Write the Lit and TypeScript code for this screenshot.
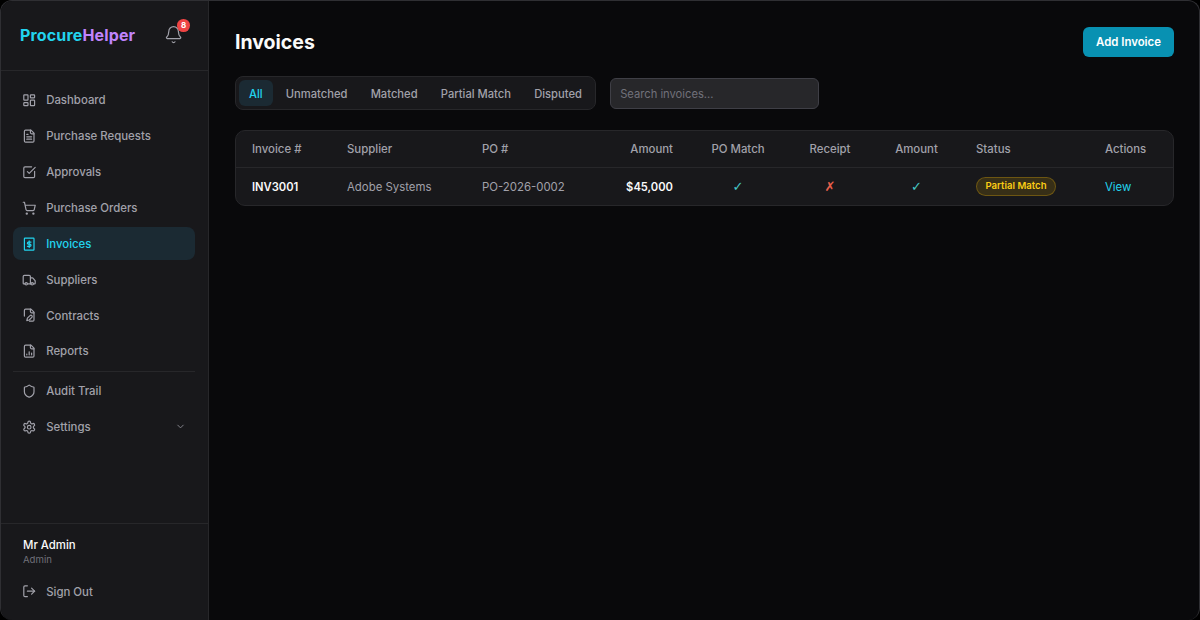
import { LitElement, html, css, svg } from "lit";
import { customElement } from "lit/decorators.js";

const icons: Record<string, any> = {
  dashboard: svg`<rect x="3" y="3" width="7" height="9" rx="1"/><rect x="14" y="3" width="7" height="5" rx="1"/><rect x="14" y="12" width="7" height="9" rx="1"/><rect x="3" y="16" width="7" height="5" rx="1"/>`,
  file: svg`<path d="M15 2H6a2 2 0 0 0-2 2v16a2 2 0 0 0 2 2h12a2 2 0 0 0 2-2V7Z"/><path d="M14 2v4a2 2 0 0 0 2 2h4"/><path d="M16 13H8"/><path d="M16 17H8"/><path d="M10 9H8"/>`,
  check: svg`<path d="M21 10.5V19a2 2 0 0 1-2 2H5a2 2 0 0 1-2-2V5a2 2 0 0 1 2-2h11"/><path d="m9 11 3 3L22 4"/>`,
  cart: svg`<circle cx="8" cy="21" r="1"/><circle cx="19" cy="21" r="1"/><path d="M2.05 2.05h2l2.66 12.42a2 2 0 0 0 2 1.58h9.78a2 2 0 0 0 1.95-1.57l1.65-7.43H5.12"/>`,
  invoice: svg`<rect x="4" y="2" width="16" height="20" rx="1"/><path d="M15 8.5h-4.2a1.75 1.75 0 0 0 0 3.5h2.4a1.75 1.75 0 0 1 0 3.5H9"/><path d="M12 6.5v11"/>`,
  truck: svg`<path d="M14 18V6a2 2 0 0 0-2-2H4a2 2 0 0 0-2 2v11a1 1 0 0 0 1 1h2"/><path d="M15 18H9"/><path d="M19 18h2a1 1 0 0 0 1-1v-3.65a1 1 0 0 0-.22-.62l-3.48-4.35A1 1 0 0 0 17.52 8H14"/><circle cx="17" cy="18" r="2"/><circle cx="7" cy="18" r="2"/>`,
  contract: svg`<path d="M12.5 22H18a2 2 0 0 0 2-2V7l-5-5H6a2 2 0 0 0-2 2v9.5"/><path d="M14 2v4a2 2 0 0 0 2 2h4"/><path d="M13.4 12.6a2 2 0 0 1 3 3L12 20l-4 1 1-4Z"/>`,
  reports: svg`<path d="M15 2H6a2 2 0 0 0-2 2v16a2 2 0 0 0 2 2h12a2 2 0 0 0 2-2V7Z"/><path d="M14 2v4a2 2 0 0 0 2 2h4"/><path d="M8 18v-1"/><path d="M12 18v-5"/><path d="M16 18v-3"/>`,
  shield: svg`<path d="M20 13c0 5-3.5 7.5-7.66 8.95a1 1 0 0 1-.67-.01C7.5 20.5 4 18 4 13V6a1 1 0 0 1 1-1c2 0 4.5-1.2 6.24-2.72a1.17 1.17 0 0 1 1.52 0C14.51 3.81 17 5 19 5a1 1 0 0 1 1 1z"/>`,
  gear: svg`<path d="M12.22 2h-.44a2 2 0 0 0-2 2v.18a2 2 0 0 1-1 1.73l-.43.25a2 2 0 0 1-2 0l-.15-.08a2 2 0 0 0-2.73.73l-.22.38a2 2 0 0 0 .73 2.73l.15.1a2 2 0 0 1 1 1.72v.51a2 2 0 0 1-1 1.74l-.15.09a2 2 0 0 0-.73 2.73l.22.38a2 2 0 0 0 2.73.73l.15-.08a2 2 0 0 1 2 0l.43.25a2 2 0 0 1 1 1.73V20a2 2 0 0 0 2 2h.44a2 2 0 0 0 2-2v-.18a2 2 0 0 1 1-1.73l.43-.25a2 2 0 0 1 2 0l.15.08a2 2 0 0 0 2.73-.73l.22-.39a2 2 0 0 0-.73-2.73l-.15-.08a2 2 0 0 1-1-1.74v-.5a2 2 0 0 1 1-1.74l.15-.09a2 2 0 0 0 .73-2.73l-.22-.38a2 2 0 0 0-2.73-.73l-.15.08a2 2 0 0 1-2 0l-.43-.25a2 2 0 0 1-1-1.73V4a2 2 0 0 0-2-2z"/><circle cx="12" cy="12" r="3"/>`,
  logout: svg`<path d="M9 21H5a2 2 0 0 1-2-2V5a2 2 0 0 1 2-2h4"/><path d="m16 17 5-5-5-5"/><path d="M21 12H9"/>`,
  bell: svg`<path d="M10.27 21a2 2 0 0 0 3.46 0"/><path d="M3.26 15.33A1 1 0 0 0 4 17h16a1 1 0 0 0 .74-1.67C19.41 13.96 18 12.5 18 8A6 6 0 0 0 6 8c0 4.5-1.41 5.96-2.74 7.33"/>`,
  chevron: svg`<path d="m6 9 6 6 6-6"/>`,
};

const icon = (n: string, cls = "ico") =>
  html`<svg class=${cls} viewBox="0 0 24 24" fill="none" stroke="currentColor" stroke-width="2" stroke-linecap="round" stroke-linejoin="round">${icons[n]}</svg>`;

@customElement("app-root")
export class AppRoot extends LitElement {
  static styles = css`
    :host {
      display: block;
      width: 1200px;
      height: 620px;
      background: #000;
      font-family: Inter, "Liberation Sans", sans-serif;
      overflow: hidden;
    }
    * { box-sizing: border-box; }
    .window {
      display: flex;
      height: 620px;
      background: #09090b;
      border: 1px solid #2f2f33;
      border-bottom: 0;
      border-radius: 12px;
      overflow: hidden;
    }
    .side {
      width: 208px;
      flex: none;
      display: flex;
      flex-direction: column;
      background: #18181b;
      border-right: 1px solid #27272a;
    }
    .brand {
      height: 70px;
      flex: none;
      display: flex;
      align-items: center;
      justify-content: space-between;
      padding: 0 24.5px 1px 19px;
      border-bottom: 1px solid #27272a;
    }
    .logo {
      font-size: 16px;
      font-weight: 700;
      letter-spacing: 0.15px;
    }
    .logo .a { color: #22d3ee; }
    .logo .b { color: #c084fc; }
    .bell { position: relative; display: flex; color: #a1a1aa; }
    .bell-ico { width: 19.2px; height: 19.2px; stroke-width: 1.5; }
    .badge {
      position: absolute;
      top: -6.4px;
      right: -6.4px;
      width: 12.8px;
      height: 12.8px;
      border-radius: 50%;
      background: #ef4444;
      color: #fff;
      font-size: 8px;
      font-weight: 700;
      display: flex;
      align-items: center;
      justify-content: center;
    }
    nav {
      flex: 1;
      padding: 12.6px 13px 0 12px;
      display: flex;
      flex-direction: column;
      gap: 2.6px;
    }
    .item {
      height: 33.3px;
      flex: none;
      display: flex;
      align-items: center;
      gap: 9.6px;
      padding: 0 9.2px;
      border-radius: 8px;
      color: #a1a1aa;
      font-size: 11.4px;
      font-weight: 500;
    }
    .item.on {
      background: #1b2a33;
      color: #22d3ee;
    }
    .ico { width: 14.4px; height: 14.4px; flex: none; stroke-width: 2; }
    .chev { width: 11px; height: 11px; margin-left: auto; stroke-width: 2; color: #8a8a92; }
    .sep { height: 1px; flex: none; background: #27272a; }
    .foot {
      height: 97px;
      flex: none;
      border-top: 1px solid #27272a;
      padding: 14px 12px 0;
    }
    .who { padding: 0 10px; }
    .name { color: #fafafa; font-size: 11.4px; font-weight: 500; line-height: 15px; }
    .role { color: #71717a; font-size: 9.6px; line-height: 14px; }
    .foot .item { margin-top: 8px; }
    main {
      flex: 1;
      min-width: 0;
      padding: 26px 25px 0 26px;
    }
    .head {
      display: flex;
      justify-content: space-between;
      align-items: center;
      height: 29.6px;
    }
    h1 {
      margin: 0;
      color: #fafafa;
      font-size: 19.5px;
      font-weight: 700;
    }
    .add {
      width: 91px;
      height: 29.6px;
      border: 0;
      border-radius: 6px;
      background: #0891b2;
      color: #fff;
      font: 600 11.4px Inter, sans-serif;
      padding: 0;
    }
    .bar {
      display: flex;
      align-items: center;
      gap: 13.6px;
      margin-top: 19.8px;
    }
    .tabs {
      display: flex;
      gap: 3.2px;
      height: 34px;
      padding: 3px;
      background: #18181b;
      border: 1px solid #27272a;
      border-radius: 8px;
    }
    .tab {
      display: flex;
      align-items: center;
      padding: 1px 10px 0;
      border-radius: 6px;
      font-size: 11.2px;
      font-weight: 500;
      color: #a1a1aa;
    }
    .tab.on { background: #1b2a33; color: #22d3ee; }
    .search {
      width: 209px;
      height: 31px;
      padding: 1px 9.6px 0;
      background: #27272a;
      border: 1px solid #3f3f46;
      border-radius: 6px;
      color: #fafafa;
      font: 11.2px Inter, sans-serif;
      outline: none;
    }
    .search::placeholder { color: #71717a; opacity: 1; }
    .card {
      margin-top: 19.6px;
      background: #18181b;
      border: 1px solid #27272a;
      border-radius: 10px;
      overflow: hidden;
    }
    table { width: 100%; border-collapse: collapse; table-layout: fixed; font-size: 11.4px; }
    th {
      height: 36.5px;
      padding: 0 16px;
      text-align: left;
      font-weight: 500;
      color: #a1a1aa;
      border-bottom: 1px solid #27272a;
    }
    td { height: 38px; padding: 0 16px; color: #a1a1aa; }
    .r { text-align: right; }
    .c { text-align: center; }
    .strong { color: #fafafa; font-weight: 600; font-size: 11.2px; }
    .ok, .no { font-family: "DejaVu Sans", sans-serif; padding-bottom: 1px; }
    .ok { color: #45c8c8; font-size: 13px; }
    .no { color: #e8604c; font-size: 13px; }
    .pill {
      display: inline-block;
      padding: 0 8.5px;
      height: 18.6px;
      line-height: 16.6px;
      border-radius: 10px;
      background: rgba(234, 179, 8, 0.15);
      border: 1px solid rgba(234, 179, 8, 0.3);
      color: #facc15;
      font-size: 9.6px;
      font-weight: 600;
      white-space: nowrap;
    }
    .view { color: #22d3ee; }
  `;

  render() {
    const nav1 = [
      ["dashboard", "Dashboard"],
      ["file", "Purchase Requests"],
      ["check", "Approvals"],
      ["cart", "Purchase Orders"],
      ["invoice", "Invoices"],
      ["truck", "Suppliers"],
      ["contract", "Contracts"],
      ["reports", "Reports"],
    ];
    return html`
      <div class="window">
        <aside class="side">
          <div class="brand">
            <div class="logo"><span class="a">Procure</span><span class="b">Helper</span></div>
            <div class="bell">
              ${icon("bell", "bell-ico")}
              <span class="badge">8</span>
            </div>
          </div>
          <nav>
            ${nav1.map(
              ([i, t]) => html`<div class="item ${t === "Invoices" ? "on" : ""}">${icon(i)}<span>${t}</span></div>`
            )}
            <div class="sep"></div>
            <div class="item">${icon("shield")}<span>Audit Trail</span></div>
            <div class="item">${icon("gear")}<span>Settings</span>${icon("chevron", "chev")}</div>
          </nav>
          <div class="foot">
            <div class="who">
              <div class="name">Mr Admin</div>
              <div class="role">Admin</div>
            </div>
            <div class="item">${icon("logout")}<span>Sign Out</span></div>
          </div>
        </aside>
        <main>
          <div class="head">
            <h1>Invoices</h1>
            <button class="add">Add Invoice</button>
          </div>
          <div class="bar">
            <div class="tabs">
              ${["All", "Unmatched", "Matched", "Partial Match", "Disputed"].map(
                (t, i) => html`<div class="tab ${i === 0 ? "on" : ""}">${t}</div>`
              )}
            </div>
            <input class="search" placeholder="Search invoices..." />
          </div>
          <div class="card">
            <table>
              <colgroup>
                <col style="width:95px" /><col style="width:135px" /><col style="width:131px" /><col style="width:92px" />
                <col style="width:98px" /><col style="width:86px" /><col style="width:87px" /><col style="width:129px" /><col />
              </colgroup>
              <thead>
                <tr>
                  <th>Invoice #</th><th>Supplier</th><th>PO #</th><th class="r">Amount</th>
                  <th class="c">PO Match</th><th class="c">Receipt</th><th class="c">Amount</th><th>Status</th><th>Actions</th>
                </tr>
              </thead>
              <tbody>
                <tr>
                  <td class="strong">INV3001</td>
                  <td>Adobe Systems</td>
                  <td>PO-2026-0002</td>
                  <td class="r strong">$45,000</td>
                  <td class="c ok">✓</td>
                  <td class="c no">✗</td>
                  <td class="c ok">✓</td>
                  <td><span class="pill">Partial Match</span></td>
                  <td class="view">View</td>
                </tr>
              </tbody>
            </table>
          </div>
        </main>
      </div>
    `;
  }
}
